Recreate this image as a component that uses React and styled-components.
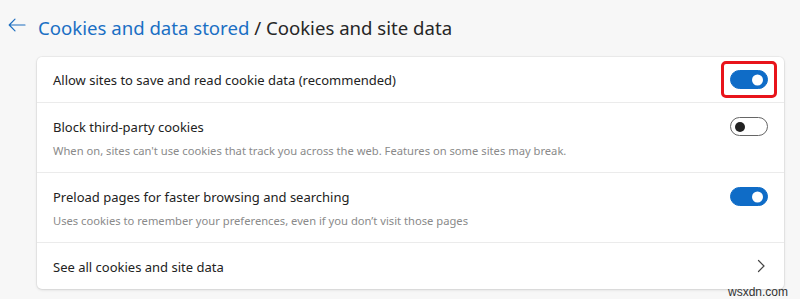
import React from 'react'
import styled, { createGlobalStyle } from 'styled-components'

const GlobalStyle = createGlobalStyle`
  html, body {
    margin: 0;
    padding: 0;
    background: #f7f7f7;
    font-family: "Segoe UI", "Noto Sans", "Open Sans", sans-serif;
  }
`

const rows = [
  { title: 'Allow sites to save and read cookie data (recommended)', on: true, highlight: true },
  {
    title: 'Block third-party cookies',
    desc: "When on, sites can't use cookies that track you across the web. Features on some sites may break.",
    on: false,
  },
  {
    title: 'Preload pages for faster browsing and searching',
    desc: 'Uses cookies to remember your preferences, even if you don\u2019t visit those pages',
    on: true,
  },
]

const App = () => {
  return (
    <>
      <GlobalStyle />
      <Page>
        <Header>
          <BackButton>
            <svg width="18" height="14" viewBox="0 0 18 14" fill="none">
              <path d="M17 7H1.5M7 1.2L1.2 7L7 12.8" stroke="#1f6fc0" strokeWidth="1.2" strokeLinecap="round" strokeLinejoin="round" />
            </svg>
          </BackButton>
          <Title>
            <Crumb>Cookies and data stored</Crumb> / Cookies and site data
          </Title>
        </Header>
        <Card>
          {rows.map((row) => (
            <Row key={row.title} tall={!!row.desc}>
              <RowText>
                <RowTitle>{row.title}</RowTitle>
                {row.desc && <RowDesc>{row.desc}</RowDesc>}
              </RowText>
              <ToggleWrap highlight={row.highlight}>
                <Toggle on={row.on} />
              </ToggleWrap>
            </Row>
          ))}
          <Row>
            <RowText>
              <RowTitle>See all cookies and site data</RowTitle>
            </RowText>
            <Chevron>
              <svg width="10" height="14" viewBox="0 0 10 14" fill="none">
                <path d="M2.5 1.5L8 7L2.5 12.5" stroke="#444" strokeWidth="1.2" strokeLinecap="round" strokeLinejoin="round" />
              </svg>
            </Chevron>
          </Row>
        </Card>
        <Watermark>wsxdn.com</Watermark>
      </Page>
    </>
  )
}

export default App

const Page = styled.div`
  width: 800px;
  height: 299px;
  box-sizing: border-box;
  padding: 12px 16px 0 0;
  position: relative;
  overflow: hidden;
`

const Header = styled.div`
  display: flex;
  align-items: center;
  height: 30px;
  margin-bottom: 15px;
`

const BackButton = styled.div`
  width: 38px;
  display: flex;
  justify-content: center;
  padding-right: 4px;
  box-sizing: border-box;
  margin-top: -4px;
`

const Title = styled.h1`
  margin: 0;
  font-size: 18.6px;
  font-weight: 400;
  color: #262626;
`

const Crumb = styled.span`
  color: #1a6fc4;
`

const Card = styled.div`
  margin-left: 37px;
  background: #fff;
  border-radius: 5px;
  box-shadow: 0 0 0 1px rgba(0, 0, 0, 0.04), 0 1px 3px rgba(0, 0, 0, 0.12);
`

const Row = styled.div`
  display: flex;
  align-items: ${(p) => (p.tall ? 'flex-start' : 'center')};
  justify-content: space-between;
  height: ${(p) => (p.tall ? '70px' : '46px')};
  padding: ${(p) => (p.tall ? '14px 16px 0' : '0 16px')};
  border-bottom: 1px solid #ebebeb;
  box-sizing: border-box;

  &:last-child {
    border-bottom: none;
  }
`

const RowText = styled.div`
  display: flex;
  flex-direction: column;
  gap: 7px;
  margin-top: 1px;
`

const RowTitle = styled.div`
  font-size: 13px;
  line-height: 18px;
  color: #222;
`

const RowDesc = styled.div`
  font-size: 11.2px;
  line-height: 16px;
  color: #8a8a8a;
`

const ToggleWrap = styled.div`
  padding: 6px;
  border: 3px solid ${(p) => (p.highlight ? '#e8141b' : 'transparent')};
  border-radius: 5px;
  margin: -9px -9px -9px 0;
  display: flex;
`

const Toggle = styled.div`
  width: 38px;
  height: 19px;
  border-radius: 10px;
  box-sizing: border-box;
  position: relative;
  background: ${(p) => (p.on ? '#0f6cc7' : '#fff')};
  border: 1px solid ${(p) => (p.on ? '#0f6cc7' : '#666')};

  &::after {
    content: '';
    position: absolute;
    top: 50%;
    transform: translateY(-50%);
    width: ${(p) => (p.on ? '11px' : '10px')};
    height: ${(p) => (p.on ? '11px' : '10px')};
    border-radius: 50%;
    background: ${(p) => (p.on ? '#fff' : '#222')};
    ${(p) => (p.on ? 'right: 4px;' : 'left: 4px;')}
  }
`

const Chevron = styled.div`
  display: flex;
  margin-right: 2px;
`

const Watermark = styled.div`
  position: absolute;
  right: 12px;
  bottom: 0px;
  font-size: 12px;
  color: #333;
  font-family: "Liberation Sans", Arial, sans-serif;
`
